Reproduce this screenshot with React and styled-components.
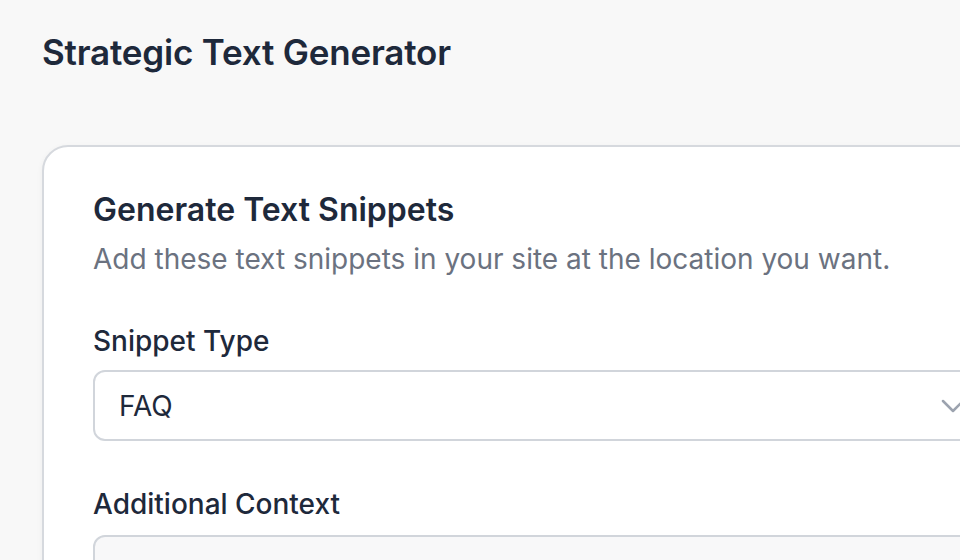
import React from "react";
import styled, { createGlobalStyle } from "styled-components";

const GlobalStyle = createGlobalStyle`
  *, *::before, *::after {
    box-sizing: border-box;
  }
  html, body {
    margin: 0;
    padding: 0;
    background: #f8f8f8;
    font-family: Inter, "Noto Sans", sans-serif;
    color: #1e293b;
    overflow: hidden;
  }
`;

const Page = styled.div`
  padding: 30px 0 0 42px;
  width: 1100px;
`;

const PageTitle = styled.h1`
  margin: 0;
  font-size: 35px;
  font-weight: 600;
  line-height: 44px;
  color: #1e293b;
  letter-spacing: -0.2px;
`;

const Card = styled.div`
  margin-top: 71px;
  background: #fff;
  border: 2px solid #d6d9de;
  border-radius: 26px;
  box-shadow: 0 2px 6px rgba(0, 0, 0, 0.05);
  padding: 43px 48px 48px 49px;
  width: 1000px;
`;

const CardTitle = styled.h2`
  margin: 0;
  font-size: 32px;
  font-weight: 600;
  line-height: 40px;
  color: #1e293b;
`;

const CardSub = styled.p`
  margin: 9px 0 0;
  font-size: 28px;
  line-height: 40px;
  color: #6b7280;
`;

const Field = styled.div`
  margin-top: ${(p) => p.$top}px;
  display: flex;
  flex-direction: column;
  gap: ${(p) => p.$gap}px;
`;

const Label = styled.label`
  font-size: 28px;
  font-weight: 500;
  line-height: 40px;
  color: #1e293b;
`;

const SelectBox = styled.div`
  position: relative;
  height: 71px;
  border: 2px solid #d1d5db;
  border-radius: 12px;
  background: #fff;
  display: flex;
  align-items: center;
  padding: 0 24px;
  font-size: 28px;
  color: #1e293b;
`;

const Chevron = styled.svg`
  position: absolute;
  right: 25px;
  top: 50%;
  transform: translateY(-50%);
`;

const TextArea = styled.div`
  height: 160px;
  border: 2px solid #d1d5db;
  border-radius: 12px;
  background: #f8f8f9;
`;

export default function App() {
  return (
    <>
      <GlobalStyle />
      <Page>
        <PageTitle>Strategic Text Generator</PageTitle>
        <Card>
          <CardTitle>Generate Text Snippets</CardTitle>
          <CardSub>Add these text snippets in your site at the location you want.</CardSub>
          <Field $top={42} $gap={9}>
            <Label>Snippet Type</Label>
            <SelectBox>
              FAQ
              <Chevron width="24" height="14" viewBox="0 0 24 14" fill="none">
                <path d="M2 2l10 10 10-10" stroke="#9ca3af" strokeWidth="2.5" strokeLinecap="round" strokeLinejoin="round" />
              </Chevron>
            </SelectBox>
          </Field>
          <Field $top={43} $gap={11}>
            <Label>Additional Context</Label>
            <TextArea />
          </Field>
        </Card>
      </Page>
    </>
  );
}
